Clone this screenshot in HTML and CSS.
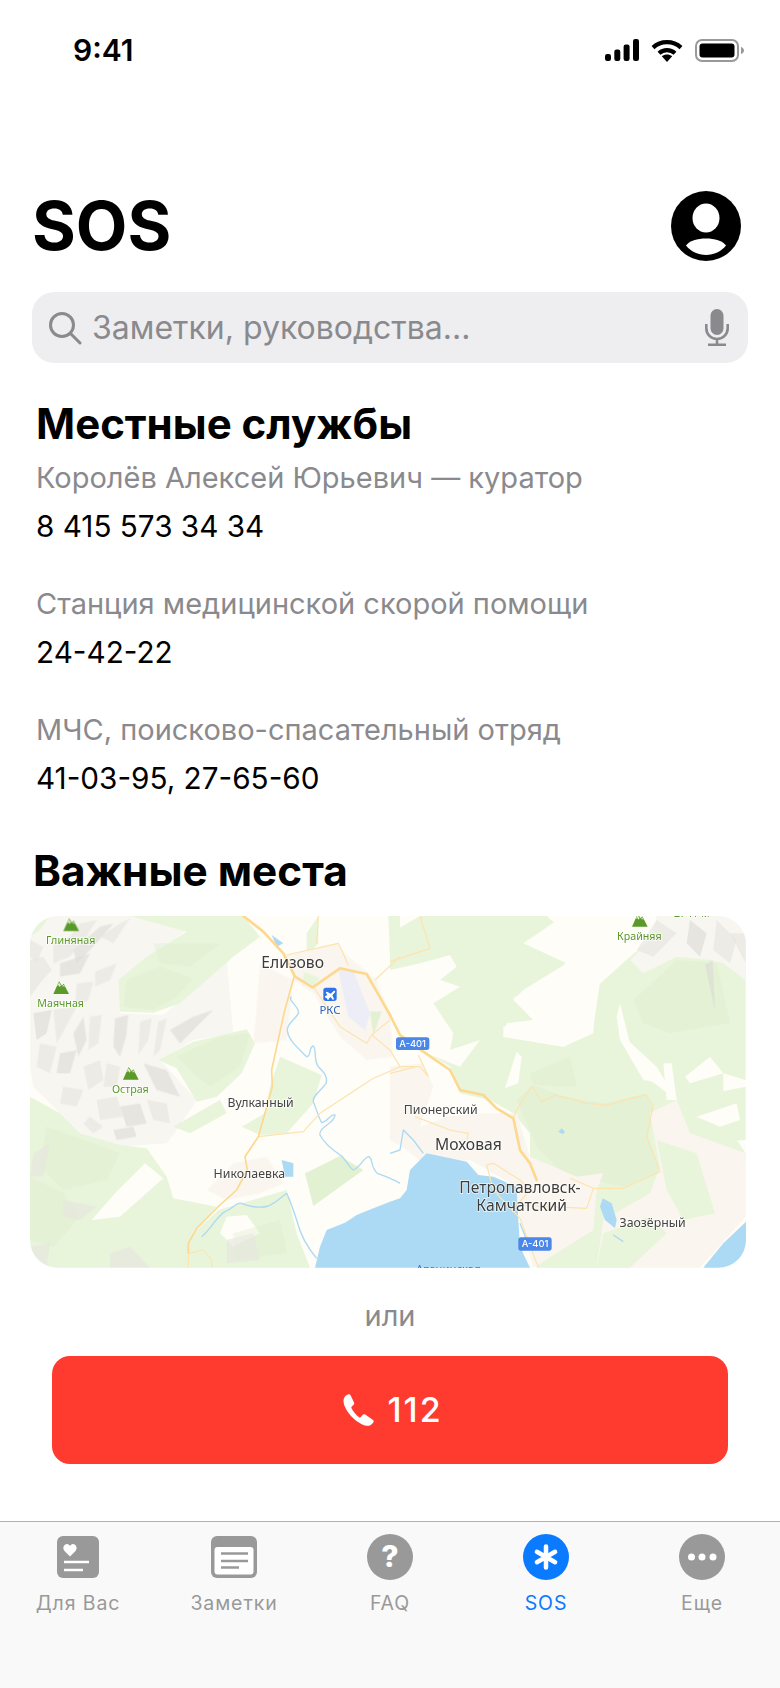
FILE: index.html
```html
<!DOCTYPE html>
<html lang="ru">
<head>
<meta charset="utf-8">
<title>SOS</title>
<link rel="stylesheet" href="styles.css">
</head>
<body>
<div class="screen">
  <div class="status">
    <span class="time">9:41</span>
    <div class="status-icons">
      <svg class="i-signal" viewBox="0 0 34 22"><rect x="0" y="15" width="6" height="7" rx="2.2"/><rect x="9.3" y="10.5" width="6" height="11.5" rx="2.2"/><rect x="18.6" y="5.5" width="6" height="16.5" rx="2.2"/><rect x="28" y="0" width="6" height="22" rx="2.2"/></svg>
      <svg class="i-wifi" viewBox="0 0 32 23"><path class="wifi-arc" d="M2 8.600C9.800 1.400 22.200 1.400 30 8.600"/><path class="wifi-arc" d="M8 14.200C12.500 10 19.500 10 24 14.200"/><path d="M10.800 17.200C13.800 14.800 18.200 14.800 21.200 17.200L16 23Z"/></svg>
      <svg class="i-batt" viewBox="0 0 49 23"><rect class="batt-frame" x="1" y="1" width="42" height="21" rx="6"/><rect x="4.500" y="4.500" width="35" height="14" rx="3"/><path class="batt-nub" d="M46 8C48 8.600 49 10 49 11.500C49 13 48 14.400 46 15Z"/></svg>
    </div>
  </div>

  <header class="head">
    <h1 class="title">SOS</h1>
    <svg class="avatar" viewBox="0 0 70 70"><circle cx="35" cy="35" r="35"/><ellipse class="white" cx="35" cy="27" rx="13.500" ry="14.500"/><path class="white" d="M15 54.500C21 45 49 45 55 54.500C50 60.500 43 64 35 64C27 64 20 60.500 15 54.500Z"/></svg>
  </header>

  <div class="search">
    <svg class="i-search" viewBox="0 0 34 34"><circle cx="14" cy="14" r="11.500"/><path d="M22.500 22.500L32 32"/></svg>
    <span class="search-text">Заметки, руководства...</span>
    <svg class="i-mic" viewBox="0 0 24 37"><rect class="mic-fill" x="5.500" y="0" width="13" height="26" rx="6.500"/><path d="M1.300 15V19C1.300 25.500 6 30 12 30C18 30 22.700 25.500 22.700 19V15M12 30V35.500M3 35.700H21"/></svg>
  </div>

  <section class="services">
    <h2 class="h-services">Местные службы</h2>
    <div class="service">
      <p class="s-name">Королёв Алексей Юрьевич — куратор</p>
      <p class="s-phone">8 415 573 34 34</p>
    </div>
    <div class="service">
      <p class="s-name">Станция медицинской скорой помощи</p>
      <p class="s-phone">24-42-22</p>
    </div>
    <div class="service">
      <p class="s-name">МЧС, поисково-спасательный отряд</p>
      <p class="s-phone">41-03-95, 27-65-60</p>
    </div>
  </section>

  <h2 class="h-places">Важные места</h2>

  <div class="map">
    <svg class="map-svg" viewBox="30 48 2148 1056" preserveAspectRatio="none">
      <defs>
        <g id="peak">
          <path class="peak-body" d="M0 38L17 0L26 13L31 7L47 38Z"/>
          <path class="peak-snow" d="M17 3L11 15L16 12L19 17L23 13ZM31 10L27 16L31 15L35 18Z"/>
        </g>
      </defs>
      <rect class="land" x="30" y="48" width="2148" height="1056"/>

      <!-- left half -->
      <g class="soft">
        <path class="h0" d="M30 48H330L500 90L420 150L310 230L300 340L430 345L540 250L620 180L640 400L520 420L420 480L530 600L470 690L440 730L300 740L180 700L120 640L40 560L30 500Z"/>
      </g>
      <path class="g1" d="M330 48H670L720 110L640 170L560 240L480 310L400 338L300 335L295 240L380 170L500 95Z"/>
      <path class="g1" d="M415 480L520 425L680 388L705 430L665 520L590 590L530 605L470 505Z"/>
      <path class="g1" d="M460 680L530 640L600 600L620 640L510 700Z"/>
      <path class="g1" d="M780 470L905 525L880 610L800 700L720 705L665 680L735 640L750 560Z"/>
      <path class="g1" d="M30 590L120 640L180 700L300 735L380 745L440 830L460 895L590 920L520 995L500 1103H30Z"/>
      <path class="land" d="M375 790L430 835L300 950L215 960L285 880Z"/>
      <path class="g1" d="M595 930L800 870L830 1000L870 1103H480L520 1000Z"/>
      <path class="land" d="M620 950L680 945L720 1000L640 1040L600 1000Z"/>
      <path class="g2" d="M855 820L960 768L1030 810L880 918Z"/>
      <path class="g1" d="M30 48H90L60 90L30 110Z"/>
      <path class="g1" d="M1105 48H1140V170L1110 170Z"/>
      <path class="g1" d="M860 100L895 48V130L860 170Z"/>
      <g class="soft">
        <path class="g3" d="M320 240L420 200L520 235L470 290L400 330L310 320Z"/>
        <path class="g3" d="M400 130L520 130L600 130L510 200L420 190Z"/>
        <path class="g3" d="M470 470L600 410L690 400L660 500L570 560L520 520Z"/>
        <path class="g3" d="M80 680L190 720L300 760L260 840L130 870L60 800Z"/>
        <path class="g3" d="M30 830L130 880L180 950L100 1040L30 1020Z"/>
        <path class="g3" d="M640 1000L780 960L800 1060L640 1080Z"/>
        <path class="h1" d="M100 130L150 110L180 70L230 60L200 110L150 170L100 190Z"/>
        <path class="h2" d="M160 150L240 80L280 70L220 140L170 190Z"/>
        <path class="h1" d="M240 110L300 70L330 55L280 130Z"/>
        <path class="h1" d="M30 180L70 170L95 210L60 250L30 290Z"/>
        <path class="h2" d="M40 340L95 330L80 400L50 420Z"/>
        <path class="h1" d="M100 330L170 320L130 395L110 430Z"/>
        <path class="h2" d="M160 400L190 350L200 420L175 470Z"/>
        <path class="h1" d="M210 350L245 345L235 430L205 450Z"/>
        <path class="h2" d="M285 355L325 345L318 410L300 470L280 440Z"/>
        <path class="h1" d="M360 365L395 355L385 420L355 465Z"/>
        <path class="h1" d="M415 365L440 355L420 450L400 470Z"/>
        <path class="h2" d="M450 390L520 350L580 330L530 380L480 430Z"/>
        <path class="h1" d="M60 430L110 440L90 520L50 500Z"/>
        <path class="h2" d="M120 460L170 450L150 520L110 520Z"/>
        <path class="h1" d="M190 500L240 480L250 540L205 570Z"/>
        <path class="h1" d="M260 490L300 500L290 560L250 560Z"/>
        <path class="h2" d="M370 490L440 510L480 590L410 570Z"/>
        <path class="h1" d="M130 560L190 570L170 620L120 610Z"/>
        <path class="h1" d="M230 600L290 590L310 650L240 660Z"/>
        <path class="h2" d="M300 620L360 610L380 670L320 680Z"/>
        <path class="h1" d="M380 600L440 610L450 670L400 660Z"/>
        <path class="h1" d="M210 650L250 680L220 700L190 670Z"/>
        <path class="h2" d="M280 690L340 680L350 710L290 720Z"/>
        <path class="h1" d="M40 760L90 730L70 830L30 830Z"/>
        <path class="h1" d="M30 120L70 140L50 190L30 170Z"/>
        <path class="h2" d="M120 190L210 160L180 220L120 230Z"/>
        <path class="h1" d="M225 215L290 190L270 240L225 260Z"/>
        <path class="h1" d="M170 250L220 245L205 300L165 320Z"/>
        <path class="h1" d="M270 1060L330 1040L390 1103H270Z"/>
        <path class="h1" d="M130 900L230 920L180 960L130 950Z"/>
        <path class="h1" d="M30 1040L90 1030L80 1103H30Z"/>
        <path class="h1" d="M620 1020L700 1000L720 1080L620 1090Z"/>
      </g>
      <path class="t" d="M800 165L950 130L985 170L1070 240L1110 350L1120 470L1040 480L960 410L880 280L820 240Z"/>
      <path class="t" d="M720 190L820 240L800 420L700 430L710 320Z"/>
      <path class="t" d="M560 870L640 790L740 770L790 850L720 880L620 900Z"/>
      <path class="apt" d="M955 210L1000 215L1050 340L1035 390L985 350Z"/>
      <path class="g2" d="M1050 335L1085 335L1060 405Z"/>
      <path class="g1" d="M850 215L900 235L880 255L850 240Z"/>

      <!-- right half -->
      <g transform="translate(1110 0)">
        <path class="g1" d="M0 100L90 48H520L400 130L530 190L400 270L370 300L430 360L340 380L340 410L520 440L610 400L620 260L720 170L870 48H1067V540L1000 520L1000 660L1067 760V720L930 730L770 700L780 630L860 600L800 500L690 400L780 540L860 600L1067 560V780L960 760L800 720L870 800L900 850L970 940L920 1000L780 1060L620 1103H440L420 950L420 700L370 640L300 600L210 580L180 500L100 450L90 380L30 300L100 230L180 170L0 210Z"/>
        <path class="land" d="M690 310L720 430L790 545L760 540L690 420L680 350Z"/>
        <path class="land" d="M820 490L845 490L860 600L830 600Z"/>
        <path class="land" d="M885 530L960 470L1000 520L900 550Z"/>
        <path class="land" d="M380 455L395 470L385 550L345 565Z"/>
        <path class="land" d="M370 295L430 260L520 200L565 100L600 140L640 180L610 380L520 440L340 410L350 370L430 360Z"/>
        <path class="land" d="M0 215L180 165L200 200L150 240L210 260L130 310L190 400L180 450L270 420L210 500L100 455L20 320Z"/>
        <path class="land" d="M470 48H560L720 60L700 110L620 250L560 130Z"/>
        <g class="soft">
          <path class="g3" d="M380 600L430 555L510 585L570 600L650 610L770 580L790 620L775 710L810 815L700 860L610 840L530 830L440 740Z"/>
          <path class="g3" d="M730 300L860 180L980 190L1020 370L840 400L760 370Z"/>
          <path class="g3" d="M420 520L540 470L560 560L430 555Z"/>
          <path class="g3" d="M880 860L960 880L975 945L900 960Z"/>
        </g>
        <path class="g1" d="M520 990L640 900L700 980L620 1103H470Z"/>
        <g class="soft">
          <path class="h0" d="M800 48H1067V240L1000 190L960 180L860 170L760 220L720 180L790 110Z"/>
          <path class="h1" d="M800 60L860 100L790 170L740 150Z"/>
          <path class="h2" d="M900 60L950 100L930 170L890 130Z"/>
          <path class="h1" d="M980 60L1040 120L1020 190L970 150Z"/>
          <path class="h2" d="M945 195L968 180L975 330Z"/>
          <path class="h1" d="M1020 100L1067 100V190Z"/>
        </g>
        <path class="t" d="M0 500L100 490L130 560L90 680L170 650L270 640L380 640L420 770L560 830L640 820L620 870L610 990L430 1103L390 960L380 860L240 780L100 790L50 750L0 720Z"/>
        <path class="t" d="M780 640L860 600L900 700L1067 760V950L930 1103H620L640 960L780 880L810 800Z"/>
        <path class="g1" d="M800 720L920 760L975 940L880 960L830 870Z"/>
        <path class="g1" d="M640 1000L780 950L830 1000L720 1103H620Z"/>
        <path class="land" d="M920 650L1040 610L1050 660L990 680Z"/>
      </g>

      <!-- water -->
      <path class="water" d="M885 1103L900 1040L920 990L975 968L1010 945L1060 925L1110 905L1140 895L1160 870L1170 810L1220 760L1340 785L1375 825L1420 830L1490 860L1495 960L1500 1040L1530 1103Z"/>
      <path class="water" d="M2050 1103L2110 1030L2178 965V1103Z"/>
      <path class="water" d="M1748 895L1775 910L1790 960L1785 985L1755 960L1740 920Z"/>
      <path class="water" d="M785 780L820 790L820 830L795 830Z"/>
      <path class="water" d="M755 105L790 130L770 140Z"/>
      <path class="water" d="M1625 685L1635 695L1628 703L1615 695Z"/>
      <path class="river" d="M815 290C800 300 840 320 835 340C825 360 800 370 802 392C805 420 830 440 860 470C875 470 865 440 880 438C890 445 880 480 895 500C910 515 925 530 918 550C905 570 875 590 880 605C890 630 895 650 905 668C925 665 930 640 945 645C945 670 895 680 900 705C915 735 945 755 965 768C980 785 990 805 1000 810C1025 800 1030 770 1048 770C1060 780 1050 800 1072 820C1100 830 1125 840 1140 850"/>
      <path class="river" d="M545 1010C570 990 590 950 615 935C640 925 650 905 665 910C690 920 720 925 745 918C765 910 780 895 800 880C810 900 820 930 830 960C840 1000 860 1040 890 1075"/>
      <path class="river" d="M1110 760L1140 750L1150 690L1180 720L1210 760"/>
      <path class="river" d="M1500 970L1520 1020L1540 1050"/>
      <path class="river" d="M1780 1005L1810 1025"/>

      <!-- thin roads -->
      <path class="road-s" d="M895 48L890 130M800 165L955 130L985 195M1140 170L1065 240M1110 360L1055 405L1040 430L960 380L880 260M1055 405L1110 450L1140 500"/>
      <path class="road-s" d="M715 710L850 695L900 640L1060 535L1140 500L1200 500L1225 530L1195 465M1110 520L1190 500"/>
      <path class="road-s" d="M1200 48L1230 145L1110 185"/>
      <path class="road-s" d="M1185 650L1290 690L1345 700L1340 720M1420 790L1400 795L1420 870L1500 955L1555 1103M1420 790L1500 840L1530 870L1490 915L1700 925L1720 865L1810 865L1920 815L1880 710L1900 615L1875 585L1760 615L1700 610L1605 585L1565 605L1535 558L1490 630L1480 655M1650 835L1720 865"/>
      <path class="road-s" d="M505 1103V1060L550 1050L575 1080V1103"/>
      <!-- main roads -->
      <path class="road-m" d="M670 48L730 95L790 160L825 230L878 262L960 205L1040 222L1110 345L1140 405L1210 455L1290 510L1320 570L1390 585L1430 625L1480 655L1500 750L1530 790L1550 840"/>
      <path class="road-m2" d="M822 230L792 340L755 510L757 560L715 710L675 770L682 810L650 870L600 915L530 985L505 1030V1060"/>

      <!-- road badges -->
      <g class="badge-road">
        <rect x="1128" y="412" width="100" height="38" rx="8"/>
        <text x="1178" y="441">А-401</text>
        <rect x="1495" y="1012" width="100" height="40" rx="8"/>
        <text x="1545" y="1042">А-401</text>
      </g>

      <!-- airport -->
      <rect class="apt-badge" x="910" y="263" width="40" height="40" rx="8"/>
      <path class="white" d="M915 289L922 285L917 277L921 275L932 281L941 273C944 271 947 274 945 277L937 286L942 297L939 300L932 291L926 296L926 299L923 300L921 295L916 293Z"/>
      <text class="lbl lbl-apt" x="930" y="343">РКС</text>

      <!-- mountains -->
      <use href="#peak" x="130" y="55"/>
      <use href="#peak" x="100" y="244"/>
      <use href="#peak" x="309" y="501"/>
      <use href="#peak" x="1836" y="42"/>
      <text class="lbl lbl-peak" x="152" y="133">Глиняная</text>
      <text class="lbl lbl-peak" x="122" y="322">Маячная</text>
      <text class="lbl lbl-peak" x="331" y="580">Острая</text>
      <text class="lbl lbl-peak" x="1858" y="120">Крайняя</text>
      <text class="lbl lbl-peak" x="2015" y="52">2741 м</text>

      <text class="lbl lbl-big" x="818" y="205">Елизово</text>
      <text class="lbl lbl-mid" x="722" y="622">Вулканный</text>
      <text class="lbl lbl-mid" x="688" y="834">Николаевка</text>
      <text class="lbl lbl-mid" x="1262" y="643">Пионерский</text>
      <text class="lbl lbl-big" x="1345" y="750">Моховая</text>
      <text class="lbl lbl-big" x="1500" y="878">Петропавловск-</text>
      <text class="lbl lbl-big" x="1505" y="932">Камчатский</text>
      <text class="lbl lbl-mid" x="1898" y="980">Заозёрный</text>
      <text class="lbl lbl-sea" x="1285" y="1118">Авачинская</text>
    </svg>
  </div>

  <p class="or">или</p>

  <div class="call">
    <svg class="i-phone" viewBox="0 0 32 32"><path d="M0.500 6C0.800 3 3 1 5.500 0.300C6.500 0 7.200 0.500 7.700 1.500L11 8.500C11.400 9.500 11.200 10.300 10.400 11L8.800 12.400C8.200 13 8.100 13.600 8.500 14.300C10.300 17.600 12.800 20.600 16 23.200C16.600 23.700 17.200 23.600 17.800 23L19.500 21C20.300 20 21.300 19.900 22.200 20.600L29.700 25.700C30.700 26.400 31 27.300 30.400 28.200C28.800 30.800 26.500 32 23.800 31.800C14 30.500 0 16 0.500 6Z"/></svg>
    <span class="call-num">112</span>
  </div>

  <nav class="tabs">
    <div class="tab">
      <svg class="tab-icon" viewBox="0 0 46 46"><rect class="tab-fill" x="2" y="2" width="42" height="42" rx="6"/><path class="white" d="M15 22.500L9.500 17C7 14 9 10 12 10C13.500 10 14.500 11 15 12C15.500 11 16.500 10 18 10C21 10 23 14 20.500 17Z"/><path class="tab-line" d="M9 28H34M9 36H28"/></svg>
      <span class="tab-label">Для Вас</span>
    </div>
    <div class="tab">
      <svg class="tab-icon" viewBox="0 0 46 46"><rect class="tab-fill" x="0" y="2" width="46" height="42" rx="6"/><rect class="white" x="3.500" y="13" width="39" height="27.500" rx="3"/><path class="tab-line-thin" d="M10 19.500H37M10 27H37M10 33.500H28"/></svg>
      <span class="tab-label">Заметки</span>
    </div>
    <div class="tab">
      <svg class="tab-icon" viewBox="0 0 46 46"><circle class="tab-fill" cx="23" cy="23" r="23"/><text class="tab-q" x="23" y="33">?</text></svg>
      <span class="tab-label">FAQ</span>
    </div>
    <div class="tab tab-active">
      <svg class="tab-icon" viewBox="0 0 46 46"><circle class="tab-fill-active" cx="23" cy="23" r="23"/><path class="tab-star" d="M23 12.500V33.500M13.900 17.750L32.100 28.250M32.100 17.750L13.900 28.250"/></svg>
      <span class="tab-label">SOS</span>
    </div>
    <div class="tab">
      <svg class="tab-icon" viewBox="0 0 46 46"><circle class="tab-fill" cx="23" cy="23" r="23"/><circle class="white" cx="12.500" cy="23" r="3.500"/><circle class="white" cx="23" cy="23" r="3.500"/><circle class="white" cx="34" cy="23" r="3.500"/></svg>
      <span class="tab-label">Еще</span>
    </div>
  </nav>
</div>
</body>
</html>
```

FILE: styles.css
```css
* { box-sizing: border-box; }
html, body { margin: 0; padding: 0; background: #fff; }
body { font-family: Inter, "Liberation Sans", sans-serif; color: #000; }
p, h1, h2 { margin: 0; }

.screen { width: 780px; height: 1688px; display: flex; flex-direction: column; overflow: hidden; }

.status { height: 100px; flex: none; padding: 0 36px 0 73px; display: flex; justify-content: space-between; align-items: center; }
.time { font-size: 30px; font-weight: 600; line-height: 36px; }
.status-icons { display: flex; align-items: center; gap: 12px; }
.status-icons svg { display: block; fill: #000; }
.i-signal { width: 34px; height: 22px; }
.i-wifi { width: 32px; height: 23px; }
.i-batt { width: 49px; height: 23px; }
.wifi-arc { fill: none; stroke: #000; stroke-width: 4.2px; }
.batt-frame { fill: none; stroke: #999; stroke-width: 2px; }
.batt-nub { fill: #999; }

.head { flex: none; height: 70px; margin-top: 91px; padding: 0 39px 0 32px; display: flex; justify-content: space-between; align-items: center; }
.title { font-size: 67px; font-weight: 700; line-height: 70px; }
.avatar { width: 70px; height: 70px; display: block; }
.white { fill: #fff; }

.search { flex: none; height: 71px; margin: 31px 32px 0; padding: 0 19px 0 16px; background: #eeeef0; border-radius: 22px; display: flex; align-items: center; }
.i-search { width: 34px; height: 34px; flex: none; fill: none; stroke: #8a8a8e; stroke-width: 3px; stroke-linecap: round; }
.search-text { flex: 1; margin-left: 10px; font-size: 32px; color: #8a8a8e; line-height: 40px; }
.i-mic { width: 24px; height: 37px; flex: none; fill: none; stroke: #8a8a8e; stroke-width: 2.6px; }
.mic-fill { fill: #8a8a8e; stroke: none; }

.services { flex: none; padding: 37px 36px 0; }
.h-services { font-size: 42px; font-weight: 700; line-height: 48px; }
.service { margin-bottom: 38px; }
.s-name { margin-top: 10px; font-size: 29px; line-height: 40px; color: #8a8a8e; }
.s-phone { margin-top: 8px; font-size: 29.700px; line-height: 40px; color: #000; }

.h-places { flex: none; padding-left: 33px; margin-top: 11px; font-size: 42.300px; font-weight: 700; line-height: 48px; }

.map { flex: none; height: 352px; margin: 21px 34px 0 30px; border-radius: 28px; overflow: hidden; }
.map-svg { display: block; width: 716px; height: 352px; filter: blur(0.35px); }
.soft { filter: blur(2px); }
.land { fill: #fefdf7; }
.g1 { fill: #e9f5db; }
.g2 { fill: #e2f1d2; }
.g3 { fill: #d9e9c8; opacity: .3; }
.h0 { fill: #f7f6f1; }
.h1 { fill: #e6e5e0; opacity: .6; }
.h2 { fill: #dcdbd6; opacity: .6; }
.t { fill: #faf6ef; }
.apt { fill: #ecedf6; }
.water { fill: #acd9f4; }
.river { fill: none; stroke: #acd9f4; stroke-width: 4px; stroke-linejoin: round; }
.road-s { fill: none; stroke: #fde3ae; stroke-width: 3.5px; stroke-linejoin: round; }
.road-m { fill: none; stroke: #fdd88f; stroke-width: 8px; stroke-linejoin: round; stroke-linecap: round; }
.road-m2 { fill: none; stroke: #fdd88f; stroke-width: 5px; stroke-linejoin: round; }
.badge-road rect { fill: #4a87e8; }
.badge-road text { font-family: Inter, sans-serif; font-size: 28px; font-weight: 500; fill: #fff; text-anchor: middle; }
.apt-badge { fill: #2f74e6; }
.peak-body { fill: #5a9a2a; }
.peak-snow { fill: #dff0c8; }
.lbl { font-family: "Noto Sans", Inter, sans-serif; text-anchor: middle; paint-order: stroke; stroke: #fff; stroke-opacity: .75; stroke-width: 5px; }
.lbl-peak { font-size: 32px; fill: #5a9a2a; }
.lbl-apt { font-size: 34px; fill: #2a62b8; }
.lbl-big { font-size: 47px; fill: #3c3c3c; }
.lbl-mid { font-size: 37px; fill: #444; }
.lbl-sea { font-size: 34px; fill: #3e78c0; stroke: none; }

.or { flex: none; margin-top: 28px; text-align: center; font-size: 29px; line-height: 40px; color: #8a8a8e; }

.call { flex: none; height: 108px; margin: 20px 52px 0; padding-left: 6px; background: #ff3b30; border-radius: 18px; display: flex; align-items: center; justify-content: center; gap: 12px; color: #fff; }
.i-phone { width: 32px; height: 32px; fill: #fff; }
.call-num { font-size: 34px; font-weight: 500; line-height: 40px; letter-spacing: 2px; }

.tabs { flex: 1; margin-top: 57px; padding: 12px 0 0; background: #f9f9f9; border-top: 1px solid #b2b2b2; display: flex; }
.tab { flex: 1; display: flex; flex-direction: column; align-items: center; color: #999; }
.tab-active { color: #0a7aff; }
.tab-icon { width: 46px; height: 46px; display: block; }
.tab-label { margin-top: 11px; font-size: 19.500px; line-height: 24px; font-weight: 400; letter-spacing: 0.9px; }
.tab-fill { fill: #999; }
.tab-fill-active { fill: #0a7aff; }
.tab-line { fill: none; stroke: #fff; stroke-width: 2.500px; }
.tab-line-thin { fill: none; stroke: #999; stroke-width: 2.500px; }
.tab-star { fill: none; stroke: #fff; stroke-width: 4.500px; stroke-linecap: round; }
.tab-q { font-family: Inter, sans-serif; font-size: 30px; font-weight: 800; fill: #fff; text-anchor: middle; }
```
